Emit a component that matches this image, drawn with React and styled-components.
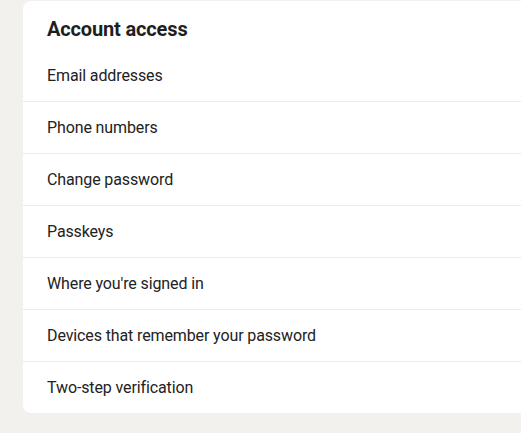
import styled, { createGlobalStyle } from "styled-components";

const GlobalStyle = createGlobalStyle`
  html, body {
    margin: 0;
    padding: 0;
    background-color: #f2f1ee;
    overflow: hidden;
  }
  body {
    font-family: Roboto, "Liberation Sans", sans-serif;
    color: #222222;
  }
`;

export const Page = styled.div`
  padding: 1px 0 0 23px;
  height: 433px;
  box-sizing: border-box;
`;

export const Card = styled.section`
  width: 520px;
  background-color: white;
  border-radius: 8px;
  overflow: hidden;
`;

export const CardTitle = styled.h2`
  margin: 0;
  padding: 16px 24px 9px;
  font-size: 20px;
  line-height: 24px;
  font-weight: 700;
  letter-spacing: -0.15px;
  color: #1f1f1f;
`;

export const SettingsList = styled.ul`
  list-style: none;
  margin: 0;
  padding: 0;
`;

export const SettingsItem = styled.li`
  height: 51px;
  display: flex;
  align-items: center;
  padding: 0 24px;
  font-size: 16px;
  letter-spacing: -0.12px;
  color: #222222;
  border-bottom: 1px solid #ebebea;

  &:last-child {
    border-bottom: none;
  }
`;

const items = [
  "Email addresses",
  "Phone numbers",
  "Change password",
  "Passkeys",
  "Where you're signed in",
  "Devices that remember your password",
  "Two-step verification",
];

export default function App() {
  return (
    <>
      <GlobalStyle />
      <Page>
        <Card>
          <CardTitle>Account access</CardTitle>
          <SettingsList>
            {items.map((item) => (
              <SettingsItem key={item}>{item}</SettingsItem>
            ))}
          </SettingsList>
        </Card>
      </Page>
    </>
  );
}
